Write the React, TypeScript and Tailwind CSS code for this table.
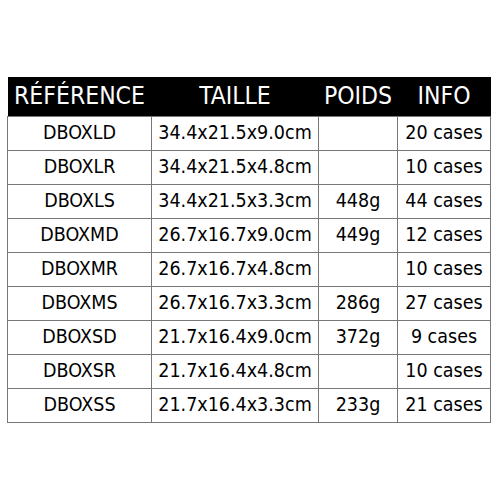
const rows = [
  ["DBOXLD", "34.4x21.5x9.0cm", "", "20 cases"],
  ["DBOXLR", "34.4x21.5x4.8cm", "", "10 cases"],
  ["DBOXLS", "34.4x21.5x3.3cm", "448g", "44 cases"],
  ["DBOXMD", "26.7x16.7x9.0cm", "449g", "12 cases"],
  ["DBOXMR", "26.7x16.7x4.8cm", "", "10 cases"],
  ["DBOXMS", "26.7x16.7x3.3cm", "286g", "27 cases"],
  ["DBOXSD", "21.7x16.4x9.0cm", "372g", "9 cases"],
  ["DBOXSR", "21.7x16.4x4.8cm", "", "10 cases"],
  ["DBOXSS", "21.7x16.4x3.3cm", "233g", "21 cases"],
];

export default function App() {
  return (
    <div className="w-[500px] h-[500px] bg-white pt-[77px] pl-[7px] font-['DejaVu_Sans_Condensed',sans-serif]">
      <table className="border-collapse w-[484px] text-black">
        <thead>
          <tr className="bg-black text-white h-[39px] text-[24.5px]">
            <th className="w-[144px] font-normal text-center">RÉFÉRENCE</th>
            <th className="w-[167px] font-normal text-center">TAILLE</th>
            <th className="w-[79px] font-normal text-center">POIDS</th>
            <th className="font-normal text-center">INFO</th>
          </tr>
        </thead>
        <tbody>
          {rows.map((r) => (
            <tr key={r[0]} className="h-[34px] text-[19.5px]">
              {r.map((c, i) => (
                <td key={i} className="border border-[#777] text-center p-0">
                  {c}
                </td>
              ))}
            </tr>
          ))}
        </tbody>
      </table>
    </div>
  );
}
